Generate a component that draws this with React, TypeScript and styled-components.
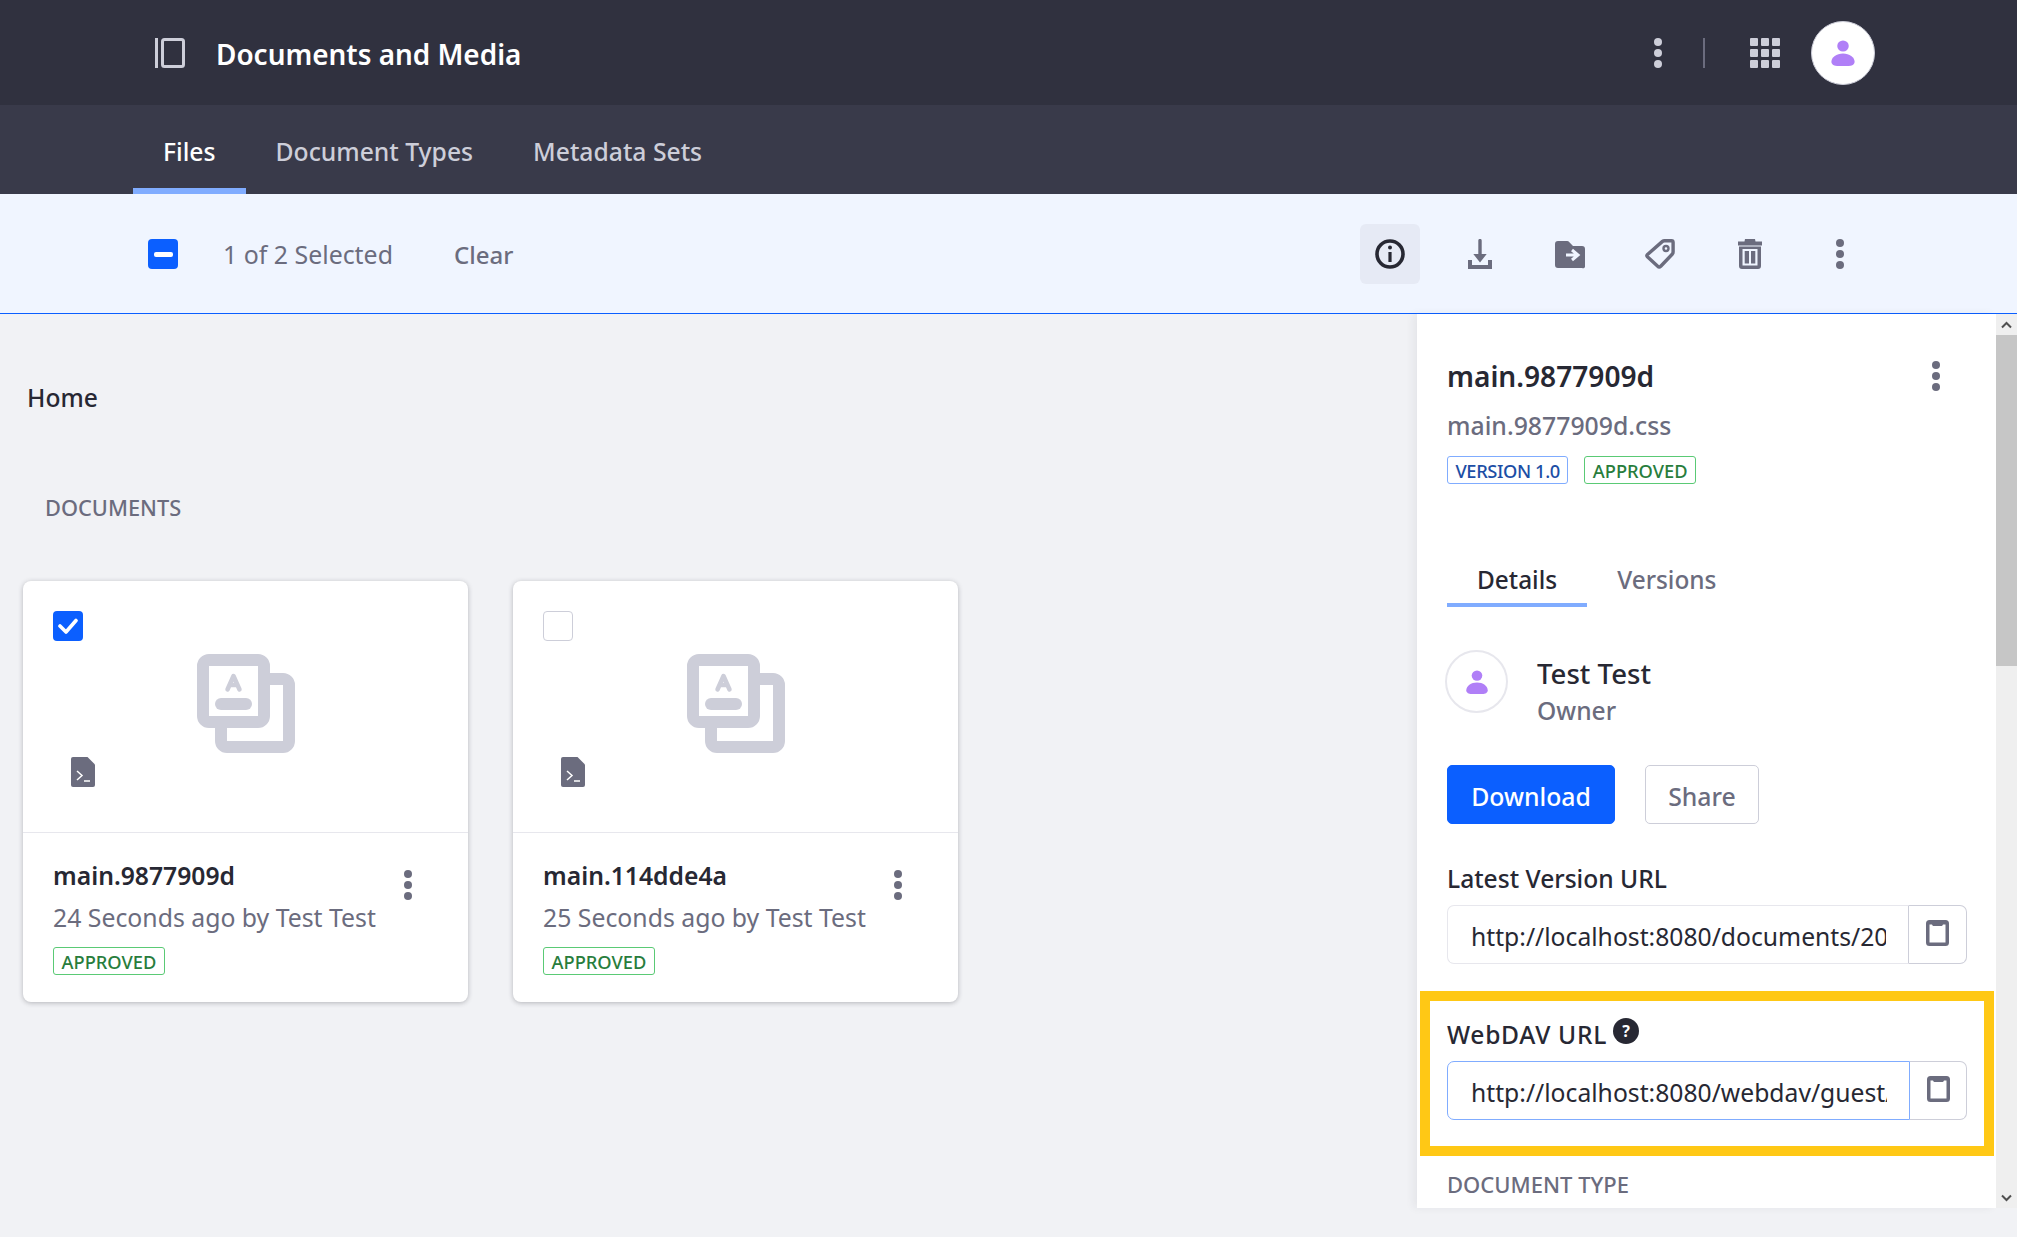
import React from "react";
import styled, { createGlobalStyle } from "styled-components";

const GlobalStyle = createGlobalStyle`
  html, body {
    margin: 0;
    padding: 0;
    background: #f1f2f5;
  }
  body {
    font-family: "Noto Sans", "Open Sans", sans-serif;
    font-size: 20px;
    color: #272833;
    overflow: hidden;
  }
  * {
    box-sizing: border-box;
  }
`;

const KebabIcon = ({ color = "#6b6c7e" }: { color?: string }) => (
  <svg width="30" height="30" viewBox="0 0 30 30" fill={color}>
    <ellipse cx="15" cy="4" rx="4" ry="4" />
    <ellipse cx="15" cy="15" rx="4" ry="4" />
    <ellipse cx="15" cy="26" rx="4" ry="4" />
  </svg>
);

const PanelToggleIcon = () => (
  <svg width="30" height="30" viewBox="0 0 30 30" fill="none" stroke="#cdced9">
    <path d="M1.5 0v30" strokeWidth="3" />
    <rect x="7.5" y="1.5" width="21" height="27" rx="2" strokeWidth="3" />
  </svg>
);

const GridIcon = () => (
  <svg width="30" height="30" viewBox="0 0 30 30" fill="#cdced9">
    {[0, 11, 22].map((y) =>
      [0, 11, 22].map((x) => <rect key={`${x}-${y}`} x={x} y={y} width="8" height="8" rx="1" />)
    )}
  </svg>
);

const UserIcon = ({ size = 26 }: { size?: number }) => (
  <svg width={size} height={size} viewBox="0 0 26 28" fill="#b07ff7">
    <ellipse cx="13" cy="6.5" rx="6.2" ry="6" />
    <path d="M13 14.5c-7 0-12.5 4-12.500 9 0 3 3 4.500 6 4.500h13c3 0 6-1.500 6-4.500 0-5-5.500-9-12.500-9z" />
  </svg>
);

const InfoIcon = () => (
  <svg width="30" height="30" viewBox="0 0 30 30" fill="none">
    <circle cx="15" cy="15" r="13" stroke="#272833" strokeWidth="3.6" />
    <circle cx="15" cy="8.600" r="2" fill="#272833" />
    <path d="M15 13v10" stroke="#272833" strokeWidth="3.200" />
  </svg>
);

const DownloadIcon = () => (
  <svg width="30" height="30" viewBox="0 0 30 30" fill="#6b6c7e">
    <path d="M13.300 1.600a1.700 1.700 0 0 1 3.400 0V15h5l-6.700 8.500L8.300 15h5z" />
    <path d="M3 21h4v5h16v-5h4v9H3z" />
  </svg>
);

const MoveIcon = () => (
  <svg width="30" height="30" viewBox="0 0 30 30">
    <path
      d="M0 5a3 3 0 0 1 3-3h9c1 0 1.800.4 2.400 1.200L18 7h9a3 3 0 0 1 3 3v17a2 2 0 0 1-3 2H3a3 3 0 0 1-3-3z"
      fill="#6b6c7e"
    />
    <path d="M11 16h10M17 11l6 5-6 5" stroke="#f0f5ff" strokeWidth="3" fill="none" />
  </svg>
);

const TagIcon = () => (
  <svg width="30" height="30" viewBox="0 0 30 30" fill="none" stroke="#6b6c7e" strokeWidth="3.400">
    <path
      d="M2.500 15.500 17.500 2.400c.6-.5 1.200-.7 2-.7h7c1 0 1.600.7 1.600 1.700v9.500c0 .8-.2 1.500-.7 2.100L15.500 27.500c-.7.800-1.900.8-2.500 0L2.400 17.700c-.6-.6-.5-1.600.1-2.200z"
      strokeLinejoin="round"
    />
    <circle cx="21" cy="9.500" r="2.500" strokeWidth="2.400" />
  </svg>
);

const TrashIcon = () => (
  <svg width="30" height="30" viewBox="0 0 30 30">
    <path d="M3 2.500h6.500L10 0h10l.5 2.500H27v4H3z" fill="#6b6c7e" />
    <path
      d="M4 7.500h22V27a3 3 0 0 1-3 3H7a3 3 0 0 1-3-3zM7.500 10v16.500h15V10zM9.700 12h4.300v12.500H9.700zM16 12h4.300v12.500H16z"
      fill="#6b6c7e"
      fillRule="evenodd"
    />
  </svg>
);

const CopyIcon = () => (
  <svg width="23" height="26" viewBox="0 0 23 26">
    <path
      d="M3.500 0h16A3.500 3.500 0 0 1 23 3.500v19a3.500 3.500 0 0 1-3.500 3.500h-16A3.500 3.500 0 0 1 0 22.500v-19A3.500 3.500 0 0 1 3.500 0zM3.500 4.500v18h16v-18h-2.500c-.5 1-1 1.500-2 1.500H8c-1 0-1.500-.5-2-1.500z"
      fill="#6b6c7e"
      fillRule="evenodd"
    />
  </svg>
);

const PreviewIcon = () => (
  <svg width="98" height="99" viewBox="0 0 98 99" fill="none" stroke="#cdced9">
    <rect x="6" y="6" width="61" height="62" rx="6" strokeWidth="12" />
    <path
      d="M73 25h13a6 6 0 0 1 6 6v56a6 6 0 0 1-6 6H30a6 6 0 0 1-6-6V74"
      strokeWidth="12"
    />
    <path d="M30.500 35.500 36.500 22l6 13.500M33 31h7" strokeWidth="4.500" strokeLinecap="round" strokeLinejoin="round" />
    <rect x="18" y="44" width="37" height="12" rx="6" fill="#cdced9" stroke="none" />
  </svg>
);

const FileCodeIcon = () => (
  <svg width="24" height="30" viewBox="0 0 24 30">
    <path
      d="M2 0h14.500L24 7.500V28a2 2 0 0 1-2 2H2a2 2 0 0 1-2-2V2a2 2 0 0 1 2-2z"
      fill="#6b6c7e"
    />
    <path d="M6 14l5 4.500-5 4.500M13 24h6" stroke="#fff" strokeWidth="1.500" fill="none" />
  </svg>
);

const CheckIcon = () => (
  <svg width="20" height="16" viewBox="0 0 20 16" fill="none">
    <path d="M2 8l6 6L18 2.500" stroke="#fff" strokeWidth="3.600" strokeLinecap="round" strokeLinejoin="round" />
  </svg>
);

const ScrollArrow = ({ down = false }: { down?: boolean }) => (
  <svg width="11" height="8" viewBox="0 0 11 8" fill="none">
    <path
      d={down ? "M1 1.500l4.500 4.500 4.500-4.500" : "M1 6.500l4.500-4.500 4.500 4.500"}
      stroke="#505050"
      strokeWidth="2"
    />
  </svg>
);

const Page = styled.div`
  width: 2017px;
  height: 1237px;
  overflow: hidden;
  background: #f1f2f5;
`;

const TopBar = styled.header`
  height: 105px;
  background: #30313f;
  display: flex;
  align-items: center;
  padding: 0 142px 0 155px;
`;

const AppTitle = styled.h1`
  margin: 2px auto 0 31px;
  font-size: 27.9px;
  font-weight: 600;
  line-height: 34px;
  color: #fff;
`;

const BarDivider = styled.span`
  width: 2px;
  height: 30px;
  margin: 0 45px 0 30px;
  background: #6b6c7e;
`;

const TopAvatar = styled.span`
  width: 64px;
  height: 64px;
  margin-left: 31px;
  border-radius: 50%;
  background: #fff;
  border: 1px solid #cdced9;
  display: flex;
  align-items: center;
  justify-content: center;
`;

const NavBar = styled.nav`
  height: 89px;
  background: #393a4a;
  display: flex;
  padding-left: 133px;
`;

const NavTab = styled.a<{ $active?: boolean }>`
  padding: 30px 30px 0;
  font-size: 24.7px;
  font-weight: 500;
  line-height: 33px;
  color: ${(p) => (p.$active ? "#fff" : "#cdced9")};
  border-bottom: 6px solid ${(p) => (p.$active ? "#80acff" : "transparent")};
`;

const ManagementBar = styled.div`
  height: 120px;
  background: #f0f5ff;
  border-bottom: 1px solid #0b5fff;
  display: flex;
  align-items: center;
  padding: 1px 147px 0 148px;
`;

const Checkbox = styled.span<{ $checked?: boolean }>`
  flex: none;
  width: 30px;
  height: 30px;
  border-radius: 4px;
  background: ${(p) => (p.$checked ? "#0b5fff" : "#fff")};
  border: ${(p) => (p.$checked ? "none" : "1px solid #cdced9")};
  display: flex;
  align-items: center;
  justify-content: center;
`;

const MinusMark = styled.span`
  width: 19px;
  height: 5px;
  border-radius: 2px;
  background: #fff;
`;

const SelectedText = styled.span`
  margin-left: 45px;
  font-size: 24.9px;
  color: #6b6c7e;
`;

const ClearLink = styled.a`
  margin: 0 auto 0 61px;
  font-size: 24px;
  font-weight: 500;
  color: #6b6c7e;
`;

const ToolGroup = styled.div`
  display: flex;
  gap: 30px;
`;

const ToolButton = styled.button<{ $active?: boolean }>`
  width: 60px;
  height: 60px;
  padding: 0;
  border: none;
  border-radius: 6px;
  background: ${(p) => (p.$active ? "#e6eaf5" : "transparent")};
  display: flex;
  align-items: center;
  justify-content: center;
`;

const Body = styled.div`
  display: flex;
  height: 894px;
`;

const Content = styled.main`
  flex: 1;
  padding: 69px 0 0 23px;
`;

const Breadcrumb = styled.div`
  margin-left: 4px;
  font-size: 24.6px;
  font-weight: 500;
  line-height: 30px;
`;

const SectionTitle = styled.div`
  margin: 80px 0 58px 22px;
  font-size: 21.8px;
  font-weight: 500;
  line-height: 30px;
  color: #6b6c7e;
`;

const CardRow = styled.div`
  display: flex;
  gap: 45px;
`;

const Card = styled.article`
  width: 445px;
  height: 421px;
  background: #fff;
  border-radius: 8px;
  box-shadow: 0 1px 5px rgba(39, 40, 51, 0.3);
`;

const CardPreview = styled.div`
  position: relative;
  height: 252px;
  border-bottom: 1px solid #e7e7ed;
  display: flex;
  justify-content: center;
  padding-top: 73px;
`;

const CardCheck = styled.div`
  position: absolute;
  left: 30px;
  top: 30px;
`;

const CardFileIcon = styled.div`
  position: absolute;
  left: 48px;
  top: 176px;
  line-height: 0;
`;

const CardBody = styled.div`
  position: relative;
  padding: 28px 30px 0;
`;

const CardTitle = styled.div`
  font-size: 24.7px;
  font-weight: 600;
  line-height: 30px;
`;

const CardMeta = styled.div`
  margin-top: 11px;
  font-size: 24.8px;
  line-height: 30px;
  color: #6b6c7e;
`;

const CardKebab = styled.div`
  position: absolute;
  right: 45px;
  top: 37px;
  line-height: 0;
`;

const Badge = styled.span<{ $tone: "green" | "blue" }>`
  display: inline-block;
  height: 28px;
  padding: 0 7.5px;
  border-radius: 3px;
  border: 1px solid ${(p) => (p.$tone === "green" ? "#5aca75" : "#80acff")};
  color: ${(p) => (p.$tone === "green" ? "#287d3c" : "#1c4ea5")};
  font-size: 18.3px;
  font-weight: 500;
  letter-spacing: ${(p) => (p.$tone === "blue" ? "-0.4px" : "0")};
  line-height: 27px;
  white-space: nowrap;
`;

const CardBadgeRow = styled.div`
  margin-top: 15px;
  line-height: 0;
`;

const Sidebar = styled.aside`
  width: 579px;
  height: 894px;
  overflow: hidden;
  flex: none;
  background: #fff;
  box-shadow: -4px 0 8px rgba(39, 40, 51, 0.06);
  padding: 47px 29px 0 30px;
`;

const SidebarHead = styled.div`
  display: flex;
  justify-content: space-between;
  padding-right: 16px;
`;

const SidebarTitle = styled.div`
  font-size: 28.1px;
  font-weight: 600;
  line-height: 30px;
`;

const SidebarFile = styled.div`
  margin-top: 19px;
  font-size: 24.8px;
  font-weight: 500;
  line-height: 30px;
  color: #6b6c7e;
`;

const BadgeRow = styled.div`
  margin-top: 16px;
  display: flex;
  gap: 16px;
`;

const TabRow = styled.div`
  margin-top: 80px;
  display: flex;
`;

const DetailTab = styled.div<{ $active?: boolean }>`
  padding: 1px 30px 8px;
  font-size: 24.4px;
  font-weight: 500;
  line-height: 30px;
  color: ${(p) => (p.$active ? "#272833" : "#6b6c7e")};
  border-bottom: 4px solid ${(p) => (p.$active ? "#80acff" : "transparent")};
`;

const OwnerRow = styled.div`
  margin: 43px 0 0 -2px;
  display: flex;
  gap: 29px;
`;

const OwnerAvatar = styled.span`
  flex: none;
  width: 63px;
  height: 63px;
  border-radius: 50%;
  border: 2px solid #e7e7ed;
  display: flex;
  align-items: center;
  justify-content: center;
`;

const OwnerName = styled.div`
  margin-top: 8px;
  font-size: 27.6px;
  font-weight: 500;
  line-height: 30px;
`;

const OwnerRole = styled.div`
  margin-top: 8px;
  font-size: 24.6px;
  font-weight: 500;
  line-height: 30px;
  color: #6b6c7e;
`;

const ActionRow = styled.div`
  margin-top: 39px;
  display: flex;
  gap: 30px;
`;

const ActionButton = styled.button<{ $primary?: boolean }>`
  height: 59px;
  width: ${(p) => (p.$primary ? "168px" : "114px")};
  padding: 2px 0 0;
  border-radius: 5px;
  border: 1px solid ${(p) => (p.$primary ? "#0b5fff" : "#cdced9")};
  background: ${(p) => (p.$primary ? "#0b5fff" : "#fff")};
  color: ${(p) => (p.$primary ? "#fff" : "#6b6c7e")};
  font-family: inherit;
  font-size: 24.8px;
  font-weight: 500;
`;

const FieldLabel = styled.div<{ $tracking?: number }>`
  display: flex;
  font-size: 24.6px;
  font-weight: 500;
  letter-spacing: ${(p) => p.$tracking ?? 0}px;
  line-height: 30px;
  color: #272833;
`;

const LatestField = styled.div`
  margin-top: 40px;
`;

const InputGroup = styled.div`
  margin-top: 11px;
  height: 59px;
  display: flex;
`;

const UrlInput = styled.input<{ $focused?: boolean }>`
  flex: 1;
  min-width: 0;
  height: 59px;
  padding: 3px 22px 0 23px;
  border: 1px solid ${(p) => (p.$focused ? "#80acff" : "#e7e7ed")};
  border-right-color: ${(p) => (p.$focused ? "#80acff" : "#cdced9")};
  border-radius: 7px 0 0 7px;
  outline: none;
  background: #fff;
  color: #272833;
  font-family: inherit;
  font-size: 24.7px;
`;

const CopyButton = styled.button<{ $width: number }>`
  flex: none;
  width: ${(p) => p.$width}px;
  height: 59px;
  padding: 0 0 3px;
  border: 1px solid #cdced9;
  border-left: none;
  border-radius: 0 7px 7px 0;
  background: #fff;
  display: flex;
  align-items: center;
  justify-content: center;
`;

const Highlight = styled.section`
  margin: 27px -27px 0;
  padding: 19px 17px 26px;
  border: 10px solid #ffc815;
`;

const HelpDot = styled.span`
  width: 26px;
  height: 26px;
  margin: -2px 0 0 6px;
  border-radius: 50%;
  background: #272833;
  color: #fff;
  font-size: 16px;
  font-weight: 700;
  letter-spacing: 0;
  line-height: 26px;
  text-align: center;
`;

const MetaHeading = styled.div`
  margin-top: 13px;
  font-size: 22px;
  font-weight: 500;
  line-height: 30px;
  color: #6b6c7e;
`;

const ScrollTrack = styled.div`
  flex: none;
  width: 21px;
  height: 894px;
  background: #efefef;
  display: flex;
  flex-direction: column;
`;

const ScrollButton = styled.div`
  height: 21px;
  flex: none;
  display: flex;
  align-items: center;
  justify-content: center;
`;

const ScrollThumb = styled.div`
  height: 331px;
  background: #c6c6c6;
`;

const ScrollFill = styled.div`
  flex: 1;
`;

const files = [
  { name: "main.9877909d", age: "24 Seconds ago by Test Test", checked: true },
  { name: "main.114dde4a", age: "25 Seconds ago by Test Test", checked: false },
];

export default function App() {
  return (
    <Page>
      <GlobalStyle />
      <TopBar>
        <PanelToggleIcon />
        <AppTitle>Documents and Media</AppTitle>
        <KebabIcon color="#cdced9" />
        <BarDivider />
        <GridIcon />
        <TopAvatar>
          <UserIcon />
        </TopAvatar>
      </TopBar>
      <NavBar>
        <NavTab $active>Files</NavTab>
        <NavTab>Document Types</NavTab>
        <NavTab>Metadata Sets</NavTab>
      </NavBar>
      <ManagementBar>
        <Checkbox $checked>
          <MinusMark />
        </Checkbox>
        <SelectedText>1 of 2 Selected</SelectedText>
        <ClearLink>Clear</ClearLink>
        <ToolGroup>
          <ToolButton $active>
            <InfoIcon />
          </ToolButton>
          <ToolButton>
            <DownloadIcon />
          </ToolButton>
          <ToolButton>
            <MoveIcon />
          </ToolButton>
          <ToolButton>
            <TagIcon />
          </ToolButton>
          <ToolButton>
            <TrashIcon />
          </ToolButton>
          <ToolButton>
            <KebabIcon />
          </ToolButton>
        </ToolGroup>
      </ManagementBar>
      <Body>
        <Content>
          <Breadcrumb>Home</Breadcrumb>
          <SectionTitle>DOCUMENTS</SectionTitle>
          <CardRow>
            {files.map((file) => (
              <Card key={file.name}>
                <CardPreview>
                  <CardCheck>
                    <Checkbox $checked={file.checked}>{file.checked && <CheckIcon />}</Checkbox>
                  </CardCheck>
                  <PreviewIcon />
                  <CardFileIcon>
                    <FileCodeIcon />
                  </CardFileIcon>
                </CardPreview>
                <CardBody>
                  <CardTitle>{file.name}</CardTitle>
                  <CardMeta>{file.age}</CardMeta>
                  <CardBadgeRow>
                    <Badge $tone="green">APPROVED</Badge>
                  </CardBadgeRow>
                  <CardKebab>
                    <KebabIcon />
                  </CardKebab>
                </CardBody>
              </Card>
            ))}
          </CardRow>
        </Content>
        <Sidebar>
          <SidebarHead>
            <SidebarTitle>main.9877909d</SidebarTitle>
            <KebabIcon />
          </SidebarHead>
          <SidebarFile>main.9877909d.css</SidebarFile>
          <BadgeRow>
            <Badge $tone="blue">VERSION 1.0</Badge>
            <Badge $tone="green">APPROVED</Badge>
          </BadgeRow>
          <TabRow>
            <DetailTab $active>Details</DetailTab>
            <DetailTab>Versions</DetailTab>
          </TabRow>
          <OwnerRow>
            <OwnerAvatar>
              <UserIcon size={24} />
            </OwnerAvatar>
            <div>
              <OwnerName>Test Test</OwnerName>
              <OwnerRole>Owner</OwnerRole>
            </div>
          </OwnerRow>
          <ActionRow>
            <ActionButton $primary>Download</ActionButton>
            <ActionButton>Share</ActionButton>
          </ActionRow>
          <LatestField>
            <FieldLabel>Latest Version URL</FieldLabel>
            <InputGroup>
              <UrlInput readOnly value="http://localhost:8080/documents/20126/0/main.9877909d.css" />
              <CopyButton $width={58}>
                <CopyIcon />
              </CopyButton>
            </InputGroup>
          </LatestField>
          <Highlight>
            <FieldLabel $tracking={0.7}>
              WebDAV URL
              <HelpDot>?</HelpDot>
            </FieldLabel>
            <InputGroup>
              <UrlInput $focused readOnly value="http://localhost:8080/webdav/guest/document_library/main.9877909d.css" />
              <CopyButton $width={57}>
                <CopyIcon />
              </CopyButton>
            </InputGroup>
          </Highlight>
          <MetaHeading>DOCUMENT TYPE</MetaHeading>
        </Sidebar>
        <ScrollTrack>
          <ScrollButton>
            <ScrollArrow />
          </ScrollButton>
          <ScrollThumb />
          <ScrollFill />
          <ScrollButton>
            <ScrollArrow down />
          </ScrollButton>
        </ScrollTrack>
      </Body>
    </Page>
  );
}
